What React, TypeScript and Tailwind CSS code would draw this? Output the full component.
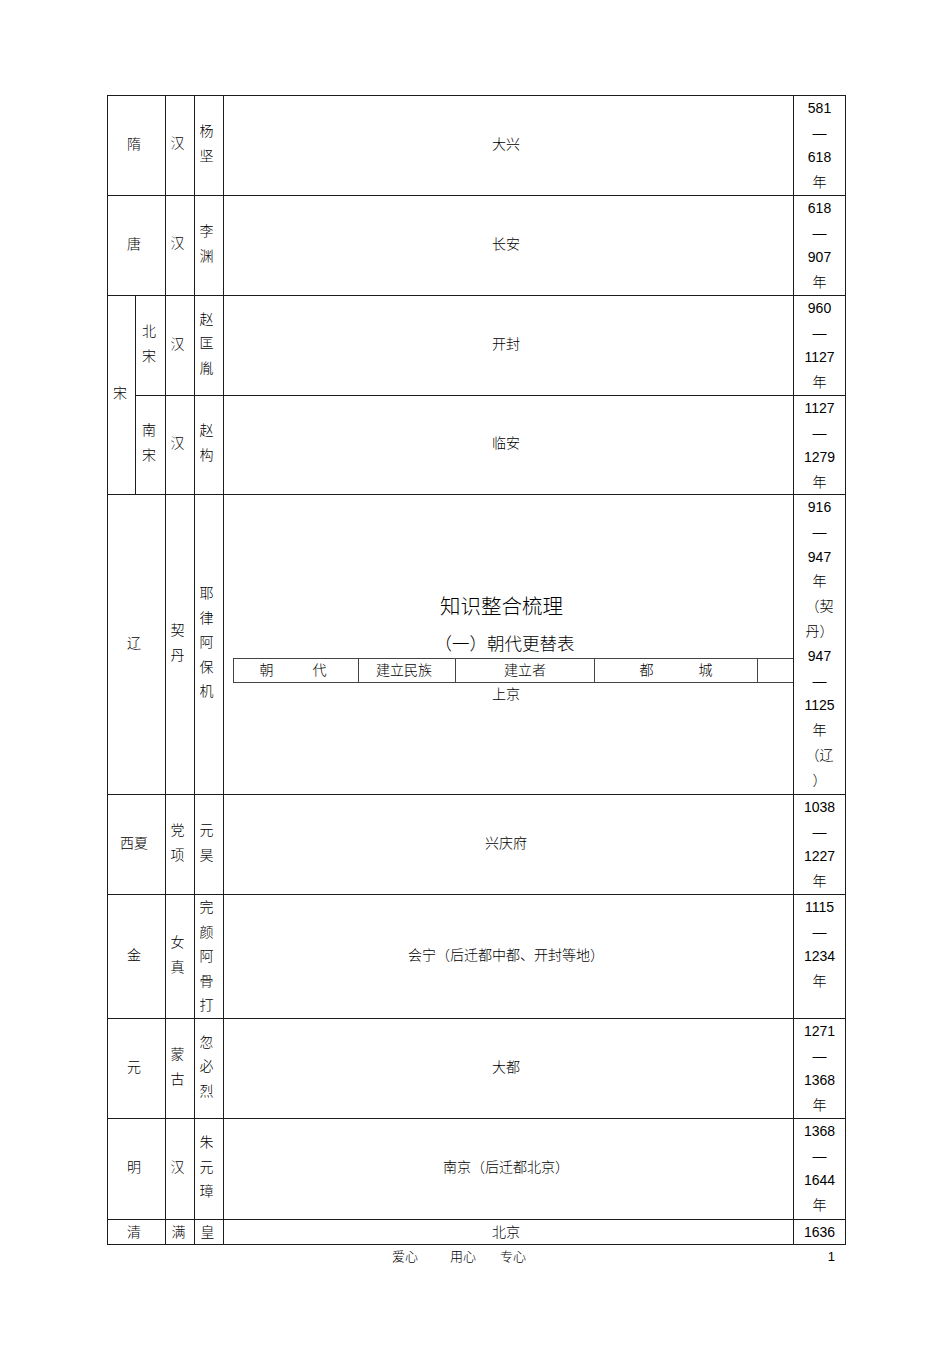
import React from "react"

type Row = {
  dyn: string
  eth: string
  founder: string
  cap: string
  date: string[]
  h: number
}

const rowsTop: Row[] = [
  { dyn: "隋", eth: "汉", founder: "杨坚", cap: "大兴", date: ["581", "—", "618", "年"], h: 100 },
  { dyn: "唐", eth: "汉", founder: "李渊", cap: "长安", date: ["618", "—", "907", "年"], h: 100 },
]

const rowsBottom: Row[] = [
  { dyn: "西夏", eth: "党项", founder: "元昊", cap: "兴庆府", date: ["1038", "—", "1227", "年"], h: 100 },
  { dyn: "金", eth: "女真", founder: "完颜阿骨打", cap: "会宁（后迁都中都、开封等地）", date: ["1115", "—", "1234", "年"], h: 124 },
  { dyn: "元", eth: "蒙古", founder: "忽必烈", cap: "大都", date: ["1271", "—", "1368", "年"], h: 100 },
  { dyn: "明", eth: "汉", founder: "朱元璋", cap: "南京（后迁都北京）", date: ["1368", "—", "1644", "年"], h: 101 },
]

// cells in the source sit a little left of and above centre
const base = "border border-[#1c1c1c] pl-0 pt-0 text-center align-middle"
const cell = base + " pr-[5px] pb-[4px]"
const cellTall = base + " pr-[5px] pb-0"
const cellNarrow = base + " pr-[3px] pb-[4px]"
const dateCell = "border border-[#1c1c1c] p-0 text-center align-top"
const lastCell = "border border-[#1c1c1c] p-0 text-center align-middle leading-[22px]"

function Stack({ text }: { text: string }) {
  return (
    <div className="flex flex-col items-center leading-[24.6px]">
      {text.split("").map((c, i) => (
        <span key={i}>{c}</span>
      ))}
    </div>
  )
}

function Dates({ lines, lh = "leading-[24.5px]" }: { lines: string[]; lh?: string }) {
  return (
    <div className={"flex flex-col items-center " + lh}>
      {lines.map((l, i) => (
        <span key={i}>{l}</span>
      ))}
    </div>
  )
}

function PlainRow({ r }: { r: Row }) {
  const tall = r.founder.length >= 5
  return (
    <tr style={{ height: r.h }}>
      <td colSpan={2} className={cell}>{r.dyn}</td>
      <td className={cell}><Stack text={r.eth} /></td>
      <td className={tall ? cellTall : cell}><Stack text={r.founder} /></td>
      <td className={cell}>{r.cap}</td>
      <td className={dateCell}><Dates lines={r.date} /></td>
    </tr>
  )
}

export default function App() {
  return (
    <div
      className="min-h-[1345px] w-[950px] bg-white pl-[107px] pt-[95px] text-[14px] font-light leading-[24px] text-black"
      style={{ fontFamily: '"Liberation Sans", "Noto Sans CJK SC", sans-serif' }}
    >
      <table className="w-[738px] table-fixed border-collapse">
        <colgroup>
          <col className="w-[28px]" />
          <col className="w-[30px]" />
          <col className="w-[29px]" />
          <col className="w-[29px]" />
          <col className="w-[570px]" />
          <col className="w-[52px]" />
        </colgroup>
        <tbody>
          {rowsTop.map((r) => (
            <PlainRow key={r.dyn} r={r} />
          ))}

          <tr className="h-[100px]">
            <td rowSpan={2} className={cellNarrow}>宋</td>
            <td className={cellNarrow}><Stack text="北宋" /></td>
            <td className={cell}>汉</td>
            <td className={cell}><Stack text="赵匡胤" /></td>
            <td className={cell}>开封</td>
            <td className={dateCell}><Dates lines={["960", "—", "1127", "年"]} /></td>
          </tr>
          <tr className="h-[99px]">
            <td className={cellNarrow}><Stack text="南宋" /></td>
            <td className={cell}>汉</td>
            <td className={cell}><Stack text="赵构" /></td>
            <td className={cell}>临安</td>
            <td className={dateCell}><Dates lines={["1127", "—", "1279", "年"]} /></td>
          </tr>

          <tr className="h-[300px]">
            <td colSpan={2} className={cell}>辽</td>
            <td className={cell}><Stack text="契丹" /></td>
            <td className={cell}><Stack text="耶律阿保机" /></td>
            <td className="border border-[#1c1c1c] p-0 pt-[97px] text-center align-top">
              <div className="pr-[14px] text-[20.5px] leading-[30px]">知识整合梳理</div>
              <div className="mt-[8px] pr-[8px] text-[17.5px] leading-[28px]">（一）朝代更替表</div>
              <table className="ml-[9px] w-[560px] table-fixed border-collapse text-[14px] leading-[23px]">
                <tbody>
                  <tr>
                    <td className="w-[125px] border border-[#444] pr-[6px]">
                      <span className="inline-flex w-[67px] justify-between"><span>朝</span><span>代</span></span>
                    </td>
                    <td className="w-[97px] border border-[#444] pr-[6px]">建立民族</td>
                    <td className="w-[139px] border border-[#444]">建立者</td>
                    <td className="w-[163px] border border-[#444]">
                      <span className="inline-flex w-[73px] justify-between"><span>都</span><span>城</span></span>
                    </td>
                    <td className="border-y border-l border-[#444]"></td>
                  </tr>
                </tbody>
              </table>
              <div className="pr-[5px] leading-[22px]">上京</div>
            </td>
            <td className={dateCell}>
              <Dates
                lh="leading-[24.8px]"
                lines={["916", "—", "947", "年", "（契", "丹）", "947", "—", "1125", "年", "（辽", "）"]}
              />
            </td>
          </tr>

          {rowsBottom.map((r) => (
            <PlainRow key={r.dyn} r={r} />
          ))}

          <tr className="h-[25px]">
            <td colSpan={2} className={lastCell + " pr-[5px]"}>清</td>
            <td className={lastCell + " pr-[3px]"}>满</td>
            <td className={lastCell + " pr-[3px]"}>皇</td>
            <td className={lastCell + " pr-[5px]"}>北京</td>
            <td className={lastCell}>1636</td>
          </tr>
        </tbody>
      </table>

      <div className="flex w-[738px] text-[13px] leading-[24px]">
        <span className="ml-[285px]">爱心</span>
        <span className="ml-[32px]">用心</span>
        <span className="ml-[24px]">专心</span>
        <span className="ml-auto mr-[10px]">1</span>
      </div>
    </div>
  )
}
